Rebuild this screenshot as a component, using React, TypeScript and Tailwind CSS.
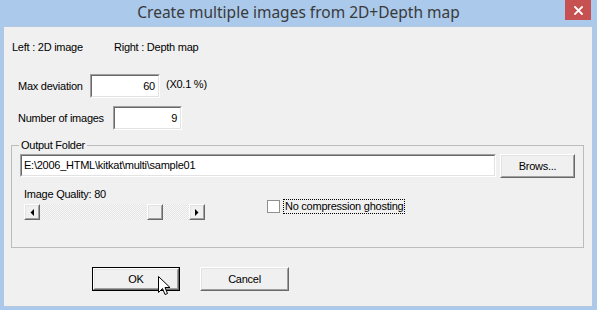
import React from "react";

const raisedOuter =
  "border border-t-white border-l-white border-r-[#696969] border-b-[#696969]";
const raisedInner =
  "border border-t-[#e3e3e3] border-l-[#e3e3e3] border-r-[#a0a0a0] border-b-[#a0a0a0] bg-[#f0f0f0]";

function SunkenBox({ w, h, value, align = "right" }: { w: string; h: string; value: string; align?: "left" | "right" }) {
  return (
    <div className={`${w} ${h} border border-t-[#a0a0a0] border-l-[#a0a0a0] border-r-white border-b-white`}>
      <div
        className={`w-full h-full border border-t-[#696969] border-l-[#696969] border-r-[#e3e3e3] border-b-[#e3e3e3] bg-white flex items-center ${
          align === "right" ? "justify-end pr-[3px]" : "justify-start pl-[2px]"
        } text-[11px] text-black`}
      >
        {value}
      </div>
    </div>
  );
}

function Btn({ w, label, isDefault = false }: { w: string; label: string; isDefault?: boolean }) {
  const inner = (
    <div className={`w-full h-full ${raisedOuter}`}>
      <div className={`w-full h-full ${raisedInner} flex items-center justify-center text-[11px] text-black`}>
        {label}
      </div>
    </div>
  );
  if (isDefault) {
    return <div className={`${w} h-[24px] border border-black`}>{inner}</div>;
  }
  return <div className={`${w} h-[24px]`}>{inner}</div>;
}

function ArrowBtn({ dir }: { dir: "left" | "right" }) {
  return (
    <div className={`w-[16px] h-[16px] ${raisedOuter}`}>
      <div className={`w-full h-full ${raisedInner} flex items-center justify-center`}>
        <svg width="4" height="7" viewBox="0 0 4 7">
          {dir === "left" ? <polygon points="4,0 4,7 0.5,3.5" fill="black" /> : <polygon points="0,0 0,7 3.5,3.5" fill="black" />}
        </svg>
      </div>
    </div>
  );
}

export default function App() {
  return (
    <div className="w-[597px] h-[310px] bg-[#aac9eb] flex flex-col font-['Liberation_Sans',Arial,sans-serif] relative overflow-hidden">
      {/* title bar */}
      <div className="h-[26px] flex items-start shrink-0">
        <div className="flex-1 pl-[32px] h-[26px] flex items-center justify-center text-[15.5px] text-[#3a3a3a] font-['Noto_Sans',sans-serif] leading-none">
          Create multiple images from 2D+Depth map
        </div>
        <div className="w-[26px] h-[20px] bg-[#c75050] mr-[6px] flex items-center justify-center">
          <svg width="9" height="9" viewBox="0 0 9 9">
            <path d="M1 1 L8 8 M8 1 L1 8" stroke="white" strokeWidth="1.8" strokeLinecap="square" />
          </svg>
        </div>
      </div>

      {/* client */}
      <div className="ml-[3px] mr-[4px] mb-[3px] flex-1 bg-[#f0f0f0] border border-[#b4c8df] text-[11px] text-black leading-[13px] tracking-[-0.25px]">
        {/* row 1 */}
        <div className="flex mt-[14px] pl-[8px] h-[13px]">
          <span className="w-[102px]">Left : 2D image</span>
          <span>Right : Depth map</span>
        </div>

        {/* Max deviation */}
        <div className="flex items-center mt-[20px] pl-[14px]">
          <span className="w-[72px]">Max deviation</span>
          <SunkenBox w="w-[70px]" h="h-[24px]" value="60" />
          <span className="ml-[6px] -mt-[3px]">(X0.1 %)</span>
        </div>

        {/* Number of images */}
        <div className="flex items-center mt-[8px] pl-[14px]">
          <span className="w-[95px]">Number of images</span>
          <SunkenBox w="w-[69px]" h="h-[24px]" value="9" />
        </div>

        {/* group box */}
        <fieldset className="ml-[7px] w-[573px] mt-[9px] border border-[#bcbcbc] pb-[27px]">
          <legend className="ml-[7px] px-[2px] h-[13px] leading-[13px]">Output Folder</legend>
          <div className="flex mt-[2px] ml-[8px] gap-[4px]">
            <SunkenBox w="w-[476px]" h="h-[23px]" value="E:\2006_HTML\kitkat\multi\sample01" align="left" />
            <Btn w="w-[75px]" label="Brows..." />
          </div>
          <div className="flex ml-[12px] mt-[10px]">
            <div className="flex flex-col w-[181px]">
              <span className="h-[12px] leading-[12px]">Image Quality: 80</span>
              <div className="flex mt-[4px] h-[16px]">
                <ArrowBtn dir="left" />
                <div className="flex-1 flex bg-[repeating-conic-gradient(#e4e4e4_0_25%,#f8f8f8_0_50%)] bg-[length:2px_2px]">
                  <div className="w-[107px]" />
                  <div className={`w-[16px] h-[16px] ${raisedOuter}`}>
                    <div className={`w-full h-full ${raisedInner}`} />
                  </div>
                </div>
                <ArrowBtn dir="right" />
              </div>
            </div>
            <div className="flex items-center ml-[62px] mt-[10px] h-[16px]">
              <div className="w-[13px] h-[13px] bg-white border border-[#8f8f8f]" />
              <span className="ml-[3px] px-[1px] border border-dotted border-black leading-[13px]">No compression ghosting</span>
            </div>
          </div>
        </fieldset>

        {/* buttons */}
        <div className="flex ml-[88px] mt-[19px] gap-[20px]">
          <Btn w="w-[88px]" label="OK" isDefault />
          <Btn w="w-[89px]" label="Cancel" />
        </div>
      </div>

      {/* mouse cursor */}
      <svg className="absolute left-[158px] top-[276px]" width="13" height="21" viewBox="0 0 13 21">
        <path d="M0.5 0.5 L0.5 16.5 L4.5 12.5 L7 18.5 L9.5 17.5 L7 11.5 L12 11.5 Z" fill="white" stroke="black" strokeWidth="1" />
      </svg>
    </div>
  );
}
